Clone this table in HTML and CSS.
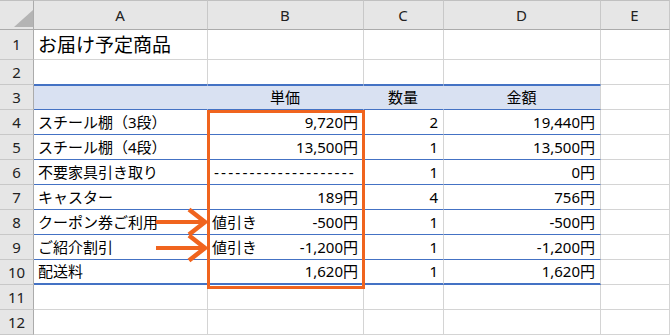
FILE: index.html
```html
<!DOCTYPE html>
<html lang="ja">
<head>
    <meta charset="UTF-8">
    <title>お届け予定商品</title>
    <link rel="stylesheet" href="styles.css">
</head>
<body>
<div class="sheet">
    <div class="row top">
        <div class="cell corner"><span class="tri"></span></div>
        <div class="cell col-head">A</div>
        <div class="cell col-head">B</div>
        <div class="cell col-head">C</div>
        <div class="cell col-head">D</div>
        <div class="cell col-head">E</div>
    </div>
    <div class="row title">
        <div class="cell row-head">1</div>
        <div class="cell big">お届け予定商品</div>
        <div class="cell"></div>
        <div class="cell"></div>
        <div class="cell"></div>
        <div class="cell"></div>
    </div>
    <div class="row">
        <div class="cell row-head">2</div>
        <div class="cell tbl"></div>
        <div class="cell tbl"></div>
        <div class="cell tbl"></div>
        <div class="cell tbl"></div>
        <div class="cell"></div>
    </div>
    <div class="row">
        <div class="cell row-head">3</div>
        <div class="cell tbl thead"></div>
        <div class="cell tbl thead center">単価</div>
        <div class="cell tbl thead center">数量</div>
        <div class="cell tbl thead thead-end center">金額</div>
        <div class="cell"></div>
    </div>
    <div class="row">
        <div class="cell row-head">4</div>
        <div class="cell tbl">スチール棚（3段）</div>
        <div class="cell tbl num">9,720円</div>
        <div class="cell tbl num">2</div>
        <div class="cell tbl num">19,440円</div>
        <div class="cell"></div>
    </div>
    <div class="row">
        <div class="cell row-head">5</div>
        <div class="cell tbl">スチール棚（4段）</div>
        <div class="cell tbl num">13,500円</div>
        <div class="cell tbl num">1</div>
        <div class="cell tbl num">13,500円</div>
        <div class="cell"></div>
    </div>
    <div class="row">
        <div class="cell row-head">6</div>
        <div class="cell tbl">不要家具引き取り</div>
        <div class="cell tbl dashes">--------------------</div>
        <div class="cell tbl num">1</div>
        <div class="cell tbl num">0円</div>
        <div class="cell"></div>
    </div>
    <div class="row">
        <div class="cell row-head">7</div>
        <div class="cell tbl">キャスター</div>
        <div class="cell tbl num">189円</div>
        <div class="cell tbl num">4</div>
        <div class="cell tbl num">756円</div>
        <div class="cell"></div>
    </div>
    <div class="row">
        <div class="cell row-head">8</div>
        <div class="cell tbl">クーポン券ご利用</div>
        <div class="cell tbl split"><span>値引き</span><span>-500円</span></div>
        <div class="cell tbl num">1</div>
        <div class="cell tbl num">-500円</div>
        <div class="cell"></div>
    </div>
    <div class="row">
        <div class="cell row-head">9</div>
        <div class="cell tbl">ご紹介割引</div>
        <div class="cell tbl split"><span>値引き</span><span>-1,200円</span></div>
        <div class="cell tbl num">1</div>
        <div class="cell tbl num">-1,200円</div>
        <div class="cell"></div>
    </div>
    <div class="row">
        <div class="cell row-head">10</div>
        <div class="cell tbl last">配送料</div>
        <div class="cell tbl last num">1,620円</div>
        <div class="cell tbl last num">1</div>
        <div class="cell tbl last num">1,620円</div>
        <div class="cell"></div>
    </div>
    <div class="row">
        <div class="cell row-head">11</div>
        <div class="cell"></div>
        <div class="cell"></div>
        <div class="cell"></div>
        <div class="cell"></div>
        <div class="cell"></div>
    </div>
    <div class="row">
        <div class="cell row-head">12</div>
        <div class="cell"></div>
        <div class="cell"></div>
        <div class="cell"></div>
        <div class="cell"></div>
        <div class="cell"></div>
    </div>

    <!-- 単価の列を囲む枠と、値引き行を指す矢印 -->
    <svg class="marks" width="670" height="335" viewBox="0 0 670 335">
        <g fill="none" stroke="#f0641e">
            <rect x="208.5" y="111.5" width="155" height="176" stroke-width="3"/>
            <line x1="156" y1="222" x2="203" y2="222" stroke-width="4"/>
            <polyline points="189,209.5 205,222 189,234.5" stroke-width="4.5"/>
            <line x1="156" y1="248" x2="203" y2="248" stroke-width="4"/>
            <polyline points="189,235.5 205,248 189,260.5" stroke-width="4.5"/>
        </g>
    </svg>
</div>
</body>
</html>
```

FILE: styles.css
```css
body, html {
    margin: 0;
    background: #fff;
    font-family: "Noto Sans", "Noto Sans CJK JP", sans-serif;
    font-size: 15px;
    color: #000;
}
.sheet {
    position: relative;
    width: 670px;
    height: 335px;
    overflow: hidden;
}
.row {
    display: grid;
    grid-template-columns: 34px 174px 156px 80px 157px 69px;
    height: 25px;
}
.row.top, .row.title {
    height: 30px;
}
.cell {
    box-sizing: border-box;
    display: flex;
    align-items: center;
    padding: 0 5px 0 4px;
    border-right: 1px solid #d4d4d4;
    border-bottom: 1px solid #d4d4d4;
    white-space: nowrap;
    overflow: hidden;
    line-height: 1;
}
.num {
    justify-content: flex-end;
}
.center {
    justify-content: center;
}
.split {
    justify-content: space-between;
}
.big {
    font-size: 19px;
    padding-top: 1px;
}

/* 行・列見出し */
.top .cell {
    border-top: 1px solid #c0c0c0;
}
.col-head {
    background: #e6e6e6;
    border-right-color: #c8c8c8;
    border-bottom-color: #ababab;
    justify-content: center;
    color: #222;
}
.row-head {
    background: #e6e6e6;
    border-right-color: #ababab;
    border-bottom-color: #c8c8c8;
    justify-content: center;
    padding: 0;
    color: #222;
}
.corner {
    background: #e6e6e6;
    border-right-color: #ababab;
    border-bottom-color: #ababab;
    justify-content: flex-end;
    align-items: flex-end;
    padding: 0 0 2px 0;
}
.tri {
    width: 0;
    height: 0;
    border-left: 19px solid transparent;
    border-bottom: 17px solid #b4b4b4;
}

/* テーブル */
.tbl {
    border-bottom-color: #4472c4;
}
.thead {
    background: #d9e1f2;
    border-top: 1px solid #4472c4;
    border-right-color: #d9e1f2;
}
.thead-end {
    border-right-color: #d4d4d4;
}
.last {
    border-bottom-width: 2px;
}
.dashes {
    font-family: "Liberation Sans", sans-serif;
    font-size: 15px;
    letter-spacing: 2.1px;
    padding: 0 2px 0 6px;
    overflow: visible;
}

.marks {
    position: absolute;
    left: 0;
    top: 0;
    pointer-events: none;
}
```
